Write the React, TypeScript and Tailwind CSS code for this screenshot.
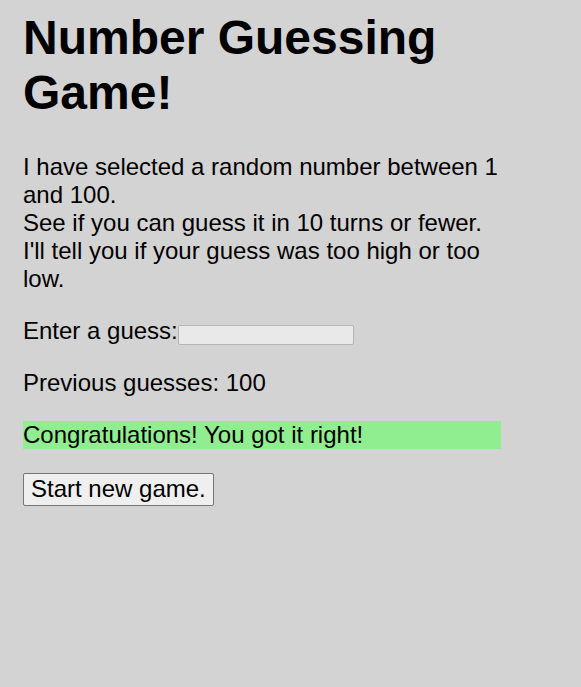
export default function App() {
	return (
		<div className="min-h-screen bg-[#d3d3d3] text-black font-['Liberation_Sans',Arial,sans-serif] overflow-hidden">
			<div className="w-[478px] ml-[23px] pt-[10px]">
				<h1 className="text-[48px] leading-[55px] font-bold mb-[33px]">
					Number Guessing Game!
				</h1>
				<p className="text-[24px] leading-[28px] mb-[24px]">
					I have selected a random number between 1 and 100.
					<br />
					See if you can guess it in 10 turns or fewer.
					<br />
					I'll tell you if your guess was too high or too low.
				</p>
				<p className="text-[24px] leading-[28px] h-[28px] mb-[24px]">
					<label htmlFor="guessField">Enter a guess:</label>
					<input
						id="guessField"
						type="number"
						disabled
						className="w-[176px] h-[20px] align-bottom bg-[#e9e9e9] border border-[#b5b5b5] rounded-[2px] text-[13px]"
					/>
				</p>
				<p className="text-[24px] leading-[28px] mb-[24px]">
					Previous guesses: 100
				</p>
				<p className="text-[24px] leading-[28px] mb-[24px] bg-[#90ee90]">
					Congratulations! You got it right!
				</p>
				<button className="text-[24px] leading-[28px] px-[7px] pt-[1px] pb-[2px] bg-[#efefef] border border-[#767676] rounded-[2px]">
					Start new game.
				</button>
			</div>
		</div>
	);
}
